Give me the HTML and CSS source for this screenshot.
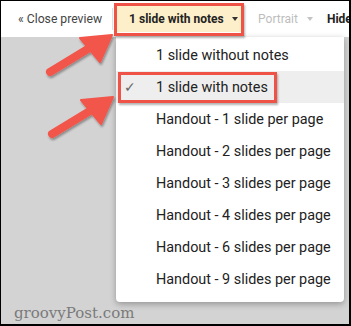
FILE: index.html
```html
<!DOCTYPE html>
<html>
<head>
<meta charset="utf-8">
<link rel="stylesheet" href="styles.css">
</head>
<body>
<div class="frame">
  <div class="toolbar">
    <span class="close">« Close preview</span>
    <span class="sep"></span>
    <span class="btn active">1 slide with notes <span class="caret"></span></span>
    <span class="btn disabled">Portrait <span class="caret light"></span></span>
    <span class="hide">Hide</span>
  </div>
  <div class="stage">
    <div class="watermark">groovyPost.com</div>
  </div>
  <div class="menu">
    <div class="item">1 slide without notes</div>
    <div class="item selected"><span class="check">✓</span>1 slide with notes</div>
    <div class="item">Handout - 1 slide per page</div>
    <div class="item">Handout - 2 slides per page</div>
    <div class="item">Handout - 3 slides per page</div>
    <div class="item">Handout - 4 slides per page</div>
    <div class="item">Handout - 6 slides per page</div>
    <div class="item">Handout - 9 slides per page</div>
  </div>
  <div class="hl hl-btn"></div>
  <div class="hl hl-item"></div>
  <svg class="arrows" width="351" height="326" viewBox="0 0 351 326">
    <defs>
      <filter id="sh" x="-20%" y="-20%" width="140%" height="140%">
        <feDropShadow dx="1" dy="2" stdDeviation="1.2" flood-color="#000" flood-opacity="0.35"/>
      </filter>
    </defs>
    <g filter="url(#sh)" fill="#f2554a" stroke="#f2554a" stroke-linecap="round" stroke-linejoin="round">
      <line x1="50" y1="72" x2="96" y2="44" stroke-width="8"/>
      <polygon points="112,35 80,38 100,62" stroke-width="2"/>
      <line x1="52" y1="134" x2="98" y2="106" stroke-width="8"/>
      <polygon points="113,97 81,100 101,124" stroke-width="2"/>
    </g>
  </svg>
</div>
</body>
</html>
```
FILE: styles.css
```css
* { box-sizing: border-box; }
html, body { margin: 0; padding: 0; }
body { font-family: Roboto, "Liberation Sans", Arial, sans-serif; }
.frame {
  position: relative;
  width: 351px;
  height: 326px;
  border: 1px solid #000;
  border-right-width: 2px;
  border-bottom-width: 2px;
  overflow: hidden;
  background: #d3d3d3;
  display: flex;
  flex-direction: column;
}
.toolbar {
  height: 36px;
  background: #fff;
  display: flex;
  align-items: center;
  font-size: 12px;
  color: #444;
  white-space: nowrap;
  flex: none;
  overflow: hidden;
}
.close { margin-left: 17px; font-size: 12.2px; }
.sep {
  width: 1px;
  height: 22px;
  background: #e0e0e0;
  margin-left: 10px;
  flex: none;
}
.btn {
  display: flex;
  align-items: center;
  height: 26px;
  flex: none;
}
.btn.active {
  margin-left: 4px;
  background: #fdefc9;
  font-weight: 700;
  color: #222;
  padding: 0 4px 0 12px;
  width: 125px;
}
.caret {
  width: 0; height: 0;
  border-left: 3.5px solid transparent;
  border-right: 3.5px solid transparent;
  border-top: 4px solid #333;
  margin-left: auto;
}
.caret.light { border-top-color: #c4c4c4; margin-left: 9px; }
.btn.disabled { color: #bdbdbd; margin-left: 16px; }
.hide { margin-left: 14px; font-weight: 700; color: #222; flex: none; }
.stage { flex: 1; position: relative; }
.watermark {
  position: absolute;
  left: 13px;
  bottom: 2px;
  font-family: "DejaVu Serif", "Liberation Serif", serif;
  font-size: 15px;
  color: #7a7a7a;
}
.menu {
  position: absolute;
  left: 115px;
  top: 36px;
  width: 228px;
  height: 265px;
  background: #fff;
  border-radius: 0 0 4px 4px;
  box-shadow: 0 2px 6px rgba(0,0,0,0.3);
  padding-top: 2px;
}
.item {
  height: 32px;
  display: flex;
  align-items: center;
  padding-left: 40px;
  font-size: 14.4px;
  color: #222;
  position: relative;
}
.item.selected { background: #eeeeee; }
.check {
  position: absolute;
  left: 8px;
  color: #666;
  font-size: 14px;
}
.hl {
  position: absolute;
  border: 3px solid #ef5247;
  box-shadow: 1px 2px 2px rgba(0,0,0,0.3);
}
.hl-btn { left: 113px; top: 2px; width: 130px; height: 33px; }
.hl-item { left: 117px; top: 71px; width: 159px; height: 31px; }
.arrows { position: absolute; left: -1px; top: -1px; pointer-events: none; }
```
